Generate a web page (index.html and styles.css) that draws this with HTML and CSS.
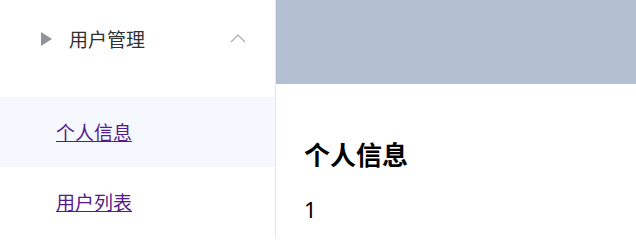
FILE: index.html
```html
<!DOCTYPE html>
<html lang="zh">
<head>
<meta charset="utf-8">
<link rel="stylesheet" href="styles.css">
</head>
<body>
<div class="layout">
  <aside class="aside">
    <div class="submenu-title">
      <svg class="tri" width="11" height="14" viewBox="0 0 11 14"><polygon points="0,0 11,7 0,14" fill="#909399"/></svg>
      <span class="title-text">用户管理</span>
      <svg class="chev" width="16" height="9" viewBox="0 0 16 9"><polyline points="1,8 8,1 15,8" fill="none" stroke="#a8abb2" stroke-width="1.2"/></svg>
    </div>
    <ul class="menu">
      <li class="menu-item active"><a href="#a">个人信息</a></li>
      <li class="menu-item"><a href="#b">用户列表</a></li>
    </ul>
  </aside>
  <main class="main">
    <header class="header"></header>
    <section class="content">
      <h2 class="heading">个人信息</h2>
      <p class="value">1</p>
    </section>
  </main>
</div>
</body>
</html>
```

FILE: styles.css
```css
html, body {
  margin: 0;
  padding: 0;
  background: #fff;
  font-family: "Noto Sans", "Noto Sans CJK SC", sans-serif;
  color: #303133;
}
.layout {
  display: flex;
  height: 238px;
  overflow: hidden;
}
.aside {
  width: 275px;
  border-right: 1px solid #e6e6e6;
  flex-shrink: 0;
}
.submenu-title {
  height: 78px;
  padding-bottom: 4px;
  display: flex;
  align-items: center;
  padding-left: 41px;
  padding-right: 29px;
}
.tri {
  display: block;
  margin-right: 17px;
}
.title-text {
  font-size: 19px;
  color: #303133;
  flex: 1;
}
.chev {
  display: block;
  margin-top: -2px;
}
.menu {
  list-style: none;
  margin: 15px 0 0;
  padding: 0;
}
.menu-item {
  height: 70px;
  display: flex;
  align-items: center;
  padding-left: 56px;
}
.menu-item.active {
  background: #f5f8fe;
}
.menu-item a {
  font-size: 19px;
  color: #551a8b;
  text-decoration: underline;
}
.main {
  flex: 1;
  display: flex;
  flex-direction: column;
}
.header {
  height: 84px;
  background: #b3c0d1;
  flex-shrink: 0;
}
.content {
  padding: 0 28px;
}
.heading {
  font-size: 26px;
  font-weight: bold;
  color: #000;
  margin: 52px 0 0;
  line-height: 38px;
}
.value {
  font-size: 22px;
  color: #000;
  margin: 20px 0 0;
  line-height: 30px;
}
```
